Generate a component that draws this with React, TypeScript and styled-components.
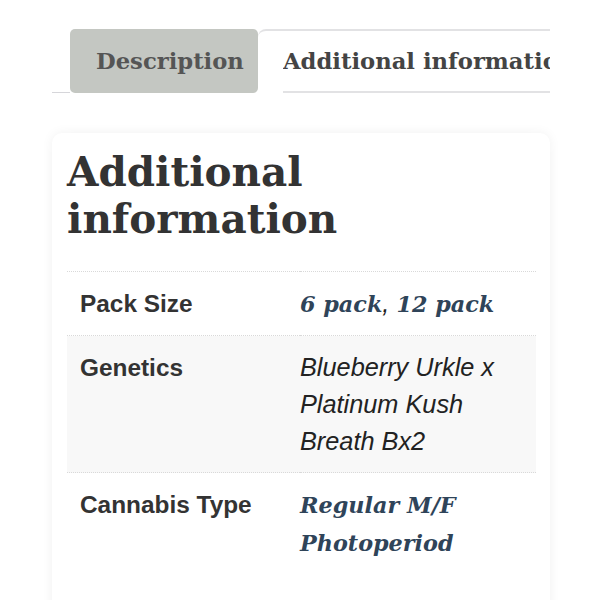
import React from "react";
import styled, { createGlobalStyle } from "styled-components";

const Global = createGlobalStyle`
  html, body { margin: 0; padding: 0; background: #ffffff; }
  body { font-family: "DejaVu Serif", serif; overflow: hidden; }
`;

const Page = styled.div`
  width: 600px;
  height: 600px;
  overflow: hidden;
  padding: 29px 50px 0 52px;
  box-sizing: border-box;
`;

const TabBar = styled.div`
  display: flex;
  align-items: stretch;
  height: 64px;
`;

const TabGap = styled.div`
  width: 18px;
  border-bottom: 1px solid #d6d6da;
  box-sizing: border-box;
`;

const ActiveTab = styled.div`
  width: 188px;
  background: #c4c7c2;
  border-radius: 5px;
  display: flex;
  align-items: center;
  padding-left: 26px;
  box-sizing: border-box;
  font-family: "DejaVu Serif", serif;
  font-weight: 700;
  font-size: 22.7px;
  color: #555555;
`;

const Tab = styled.div`
  flex: 1;
  min-width: 0;
  border-top: 2px solid #e2e2e4;
  border-top-left-radius: 8px;
  padding-left: 25px;
  display: flex;
  box-sizing: border-box;
`;

const TabLabel = styled.div`
  flex: 1;
  overflow: hidden;
  white-space: nowrap;
  border-bottom: 2px solid #e2e2e4;
  display: flex;
  align-items: center;
  font-family: "DejaVu Serif", serif;
  font-weight: 700;
  font-size: 22.7px;
  color: #444444;
`;

const Card = styled.section`
  margin-top: 40px;
  background: #ffffff;
  border-radius: 10px;
  box-shadow: 0 0 12px rgba(0, 0, 0, 0.06);
  padding: 16px 14px 40px 15px;
  min-height: 500px;
`;

const Heading = styled.h2`
  margin: 0 0 28px;
  font-family: "DejaVu Serif", serif;
  font-weight: 700;
  font-size: 40.5px;
  line-height: 47px;
  color: #333333;
`;

const Table = styled.table`
  width: 100%;
  border-collapse: collapse;
  border-top: 1px dotted #d9d9d9;
`;

const Row = styled.tr<{ $shade?: boolean; $last?: boolean }>`
  background: ${(p) => (p.$shade ? "#f8f8f8" : "transparent")};
  border-bottom: ${(p) => (p.$last ? "none" : "1px dotted #d9d9d9")};
`;

const Label = styled.th`
  width: 220px;
  text-align: left;
  vertical-align: top;
  padding: 12.5px 0 12.5px 13px;
  font-family: "Liberation Sans", Arial, sans-serif;
  font-weight: 700;
  font-size: 24.4px;
  line-height: 37px;
  color: #333333;
`;

const Value = styled.td`
  vertical-align: top;
  padding: 12.5px 0 12.5px 0;
  font-family: "Liberation Sans", Arial, sans-serif;
  font-style: italic;
  font-size: 25.3px;
  line-height: 37px;
  color: #222222;
`;

const Link = styled.a`
  font-family: "DejaVu Serif", serif;
  font-weight: 700;
  font-style: italic;
  font-size: 22.3px;
  color: #2f4459;
  text-decoration: none;
`;

export default function App() {
  return (
    <>
      <Global />
      <Page>
        <TabBar>
          <TabGap />
          <ActiveTab>Description</ActiveTab>
          <Tab>
            <TabLabel>Additional information</TabLabel>
          </Tab>
        </TabBar>
        <Card>
          <Heading>Additional information</Heading>
          <Table>
            <tbody>
              <Row>
                <Label>Pack Size</Label>
                <Value>
                  <Link href="#">6 pack</Link>, <Link href="#">12 pack</Link>
                </Value>
              </Row>
              <Row $shade>
                <Label>Genetics</Label>
                <Value>Blueberry Urkle x Platinum Kush Breath Bx2</Value>
              </Row>
              <Row $last>
                <Label>Cannabis Type</Label>
                <Value>
                  <Link href="#">Regular M/F Photoperiod</Link>
                </Value>
              </Row>
            </tbody>
          </Table>
        </Card>
      </Page>
    </>
  );
}
